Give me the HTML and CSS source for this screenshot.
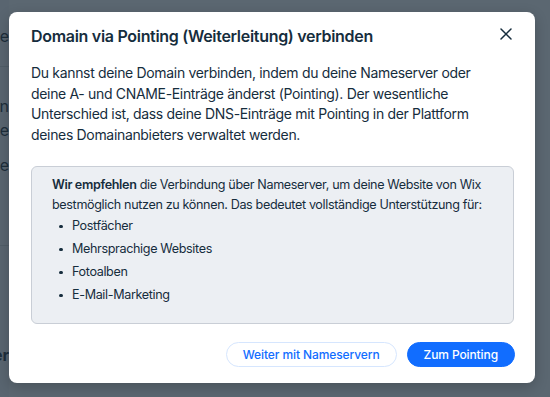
FILE: index.html
```html
<!DOCTYPE html>
<html lang="de">
<head>
  <meta charset="UTF-8" />
  <meta name="viewport" content="width=device-width, initial-scale=1.0"/>
  <title>Domain verbinden</title>
  <link rel="stylesheet" href="styles.css">
</head>
<body>
  <!-- Page behind the dialog (only a thin strip shows) -->
  <div class="page">
    <div class="side-item first">Domaine</div>
    <div class="side-rule"></div>
    <div class="side-item s2">Domain</div>
    <div class="side-item s3">Website</div>
    <div class="side-item s4">Werkzeuge</div>
    <div class="side-rule r2"></div>
    <div class="side-item bold s5">Weiter</div>
  </div>

  <!-- Overlay + dialog -->
  <div class="overlay">
    <div class="modal">
      <div class="modal-header">
        <h1 class="modal-title">Domain via Pointing (Weiterleitung) verbinden</h1>
        <button class="close-btn" aria-label="Schließen">
          <svg width="12" height="12" viewBox="0 0 12 12">
            <path d="M1 1 L11 11 M11 1 L1 11" stroke="#162d3d" stroke-width="1.5" stroke-linecap="round"/>
          </svg>
        </button>
      </div>

      <p class="intro">
        Du kannst deine Domain verbinden, indem du deine Nameserver oder
        deine A- und CNAME-Einträge änderst (Pointing). Der wesentliche
        Unterschied ist, dass deine DNS-Einträge mit Pointing in der Plattform
        deines Domainanbieters verwaltet werden.
      </p>

      <div class="info-box">
        <p><strong>Wir empfehlen</strong> die Verbindung über Nameserver, um deine Website von Wix
        bestmöglich nutzen zu können. Das bedeutet vollständige Unterstützung für:</p>
        <ul class="features">
          <li>Postfächer</li>
          <li>Mehrsprachige Websites</li>
          <li>Fotoalben</li>
          <li>E-Mail-Marketing</li>
        </ul>
      </div>

      <div class="modal-footer">
        <button class="btn btn-secondary">Weiter mit Nameservern</button>
        <button class="btn btn-primary">Zum Pointing</button>
      </div>
    </div>
  </div>
</body>
</html>
```

FILE: styles.css
```css
/* Reset */
* {
  margin: 0;
  padding: 0;
  box-sizing: border-box;
}
body {
  font-family: Inter, "Noto Sans", sans-serif;
  background: #ffffff;
  width: 550px;
  height: 397px;
  overflow: hidden;
  position: relative;
  color: #162d3d;
}

/* Page behind the overlay */
.page {
  width: 9px;
  height: 100%;
  overflow: hidden;
  padding-top: 26px;
  display: flex;
  flex-direction: column;
  align-items: flex-end;
  background: #f7f8fa;
}
.side-item {
  font-size: 16px;
  line-height: 20px;
  color: #32404a;
  white-space: nowrap;
  flex-shrink: 0;
}
.side-item.bold {
  font-weight: 700;
}
.side-rule {
  flex-shrink: 0;
  width: 100%;
  height: 1px;
  background: #d9dde2;
  margin: 20px 0 29px;
}
.side-rule.r2 {
  margin: 70px 0 99px;
}
.s3 { margin-top: 4px; }
.s4 { margin-top: 15px; }

/* Overlay */
.overlay {
  position: absolute;
  inset: 0;
  background: rgba(22, 38, 52, 0.7);
  padding: 12px 0 0 9px;
}

/* Dialog */
.modal {
  width: 526px;
  height: 371px;
  background: #fff;
  border-radius: 8px;
  box-shadow: 0 4px 14px rgba(0, 0, 0, 0.2);
  padding: 11px 20px 0 22px;
  display: flex;
  flex-direction: column;
}
.modal-header {
  display: flex;
  justify-content: space-between;
  align-items: center;
  height: 26px;
}
.modal-title {
  font-size: 16px;
  font-weight: 600;
  letter-spacing: -0.3px;
  line-height: 26px;
  color: #162d3d;
}
.close-btn {
  border: none;
  background: none;
  width: 24px;
  height: 24px;
  display: flex;
  align-items: center;
  justify-content: center;
  margin-right: -3px;
  margin-top: -4px;
  cursor: pointer;
}

.intro {
  margin-top: 14px;
  max-width: 462px;
  font-size: 14px;
  letter-spacing: -0.33px;
  line-height: 20.6px;
  color: #162d3d;
}

/* Recommendation box */
.info-box {
  margin-top: 21px;
  margin-right: 1px;
  height: 158px;
  background: #eceff3;
  border: 1px solid #c9ced6;
  border-radius: 6px;
  padding: 8px 20px 0 20px;
  font-size: 12.6px;
  letter-spacing: -0.36px;
  line-height: 20px;
  color: #162d3d;
}
.info-box strong {
  font-weight: 600;
}
.features {
  list-style: none;
  margin-top: 1px;
  display: flex;
  flex-direction: column;
  gap: 3px;
}
.features li {
  position: relative;
  padding-left: 20px;
}
.features li::before {
  content: "";
  position: absolute;
  left: 7px;
  top: 8.5px;
  width: 3.5px;
  height: 3.5px;
  border-radius: 50%;
  background: #162d3d;
}

/* Footer buttons */
.modal-footer {
  margin-top: 18px;
  display: flex;
  justify-content: flex-end;
  gap: 10px;
}
.btn {
  height: 25px;
  border-radius: 13px;
  font-family: inherit;
  font-size: 12px;
  letter-spacing: -0.1px;
  font-weight: 500;
  padding: 0 16px;
  cursor: pointer;
}
.btn-secondary {
  background: #fff;
  border: 1px solid #d6e6fe;
  color: #116dff;
}
.btn-primary {
  background: #116dff;
  border: 1px solid #116dff;
  color: #fff;
}
```
